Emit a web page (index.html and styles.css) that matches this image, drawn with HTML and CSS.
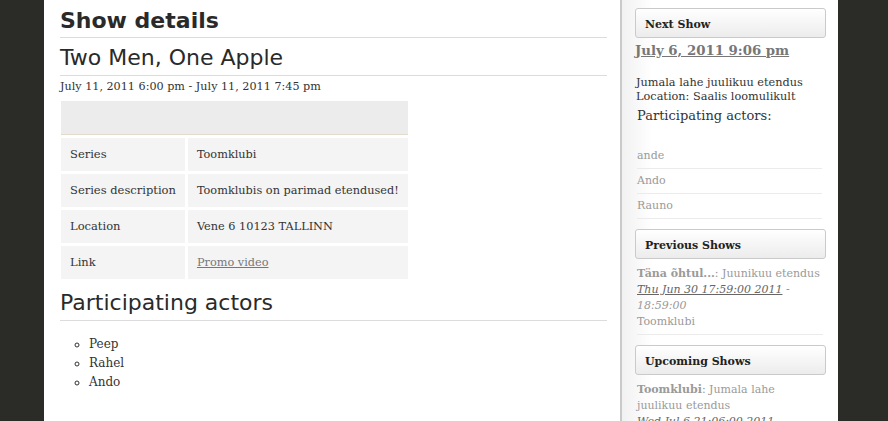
FILE: index.html
```html
<!DOCTYPE html>
<html lang="en">
<head>
<meta charset="utf-8">
<title>Show details</title>
<link rel="stylesheet" href="styles.css">
</head>
<body>
<div class="page">
  <div class="main">
    <h1 class="title">Show details</h1>
    <h2 class="subtitle">Two Men, One Apple</h2>
    <div class="date">July 11, 2011 6:00 pm - July 11, 2011 7:45 pm</div>
    <table class="details">
      <tr><th class="head" colspan="2"></th></tr>
      <tr><td class="label">Series</td><td class="value">Toomklubi</td></tr>
      <tr><td class="label">Series description</td><td class="value">Toomklubis on parimad etendused!</td></tr>
      <tr><td class="label">Location</td><td class="value">Vene 6 10123 TALLINN</td></tr>
      <tr><td class="label">Link</td><td class="value"><a class="link" href="#">Promo video</a></td></tr>
    </table>
    <h2 class="subtitle section">Participating actors</h2>
    <ul class="actors">
      <li>Peep</li>
      <li>Rahel</li>
      <li>Ando</li>
    </ul>
  </div>
  <div class="sidebar">
    <div class="box">Next Show</div>
    <div class="next-date"><a href="#">July 6, 2011 9:06 pm</a></div>
    <p class="desc">Jumala lahe juulikuu etendus<br>Location: Saalis loomulikult</p>
    <h4 class="side-heading">Participating actors:</h4>
    <ul class="side-list">
      <li>ande</li>
      <li>Ando</li>
      <li>Rauno</li>
    </ul>
    <div class="box spaced">Previous Shows</div>
    <div class="show">
      <b>Täna õhtul...</b>: Juunikuu etendus<br>
      <i><a href="#">Thu Jun 30 17:59:00 2011</a> - 18:59:00</i><br>
      Toomklubi
    </div>
    <div class="box spaced">Upcoming Shows</div>
    <div class="show">
      <b>Toomklubi</b>: Jumala lahe juulikuu etendus<br>
      <i><a href="#">Wed Jul 6 21:06:00 2011</a> - 22:06:00</i><br>
      Toomklubi
    </div>
  </div>
</div>
</body>
</html>
```

FILE: styles.css
```css
html, body {
  margin: 0;
  padding: 0;
}
body {
  background: #2b2b27;
  font-family: "DejaVu Serif", "Liberation Serif", serif;
  font-size: 11.3px;
  color: #333;
  height: 421px;
  overflow: hidden;
}
.page {
  width: 794px;
  margin-left: 44px;
  background: #fff;
  display: flex;
  min-height: 421px;
}
.main {
  width: 547px;
  padding: 8px 13px 0 16px;
}
.title {
  font-family: "DejaVu Sans", sans-serif;
  font-size: 22px;
  font-weight: bold;
  line-height: 26px;
  color: #2a2a2a;
  margin: 0;
  padding-bottom: 3px;
  border-bottom: 1px solid #dcdcdc;
}
.subtitle {
  font-family: "DejaVu Sans", sans-serif;
  font-size: 22px;
  font-weight: normal;
  line-height: 26px;
  color: #2a2a2a;
  margin: 7px 0 0;
  padding-bottom: 4px;
  border-bottom: 1px solid #dcdcdc;
}
.subtitle.section {
  margin-top: 8px;
}
.date {
  margin-top: 2px;
  line-height: 17px;
  font-size: 11.2px;
  color: #333;
}
.details {
  margin: 3px 0 0 -2px;
  border-collapse: separate;
  border-spacing: 3px;
}
.head {
  height: 33px;
  padding: 0;
  background: #ececec;
  border-bottom: 1px solid #e3dccd;
}
.label, .value {
  background: #f4f4f4;
  padding: 8px 9px;
  line-height: 17px;
  white-space: nowrap;
  color: #333;
}
.label {
  font-size: 11.5px;
}
.link {
  color: #777;
}
.actors {
  margin: 14px 0 0;
  padding-left: 29px;
  list-style: circle;
  font-size: 12px;
  line-height: 19px;
  color: #333;
}
.sidebar {
  width: 191px;
  padding: 8px 12px 0 13px;
  border-left: 2px solid #c9c9c9;
  background: linear-gradient(to right, #f1f1f1 0, #fff 30px);
}
.box {
  height: 24px;
  line-height: 24px;
  padding: 4px 9px 0;
  border: 1px solid #cacaca;
  border-radius: 3px;
  background: linear-gradient(to bottom, #fff 0, #ececec 100%);
  font-size: 11px;
  font-weight: bold;
  color: #222;
}
.box.spaced {
  margin-top: 10px;
}
.next-date {
  margin-top: 4px;
  line-height: 17px;
  font-size: 13.3px;
  font-weight: bold;
}
.next-date a {
  color: #777;
}
.desc {
  margin: 17px 0 0 1px;
  line-height: 14px;
  color: #333;
}
.side-heading {
  margin: 3px 0 0 2px;
  font-size: 13px;
  font-weight: normal;
  line-height: 18px;
  color: #333;
}
.side-list {
  list-style: none;
  margin: 19px 4px 0 2px;
  padding: 0;
  font-size: 11px;
  color: #9a9a9a;
}
.side-list li {
  padding: 4px 0;
  line-height: 16px;
  border-bottom: 1px solid #ebebeb;
}
.show {
  margin: 0 3px 0 2px;
  padding: 7px 0 4px;
  font-size: 11px;
  line-height: 16px;
  color: #9a9a9a;
  border-bottom: 1px solid #ebebeb;
}
.show a {
  color: #666;
}
```
